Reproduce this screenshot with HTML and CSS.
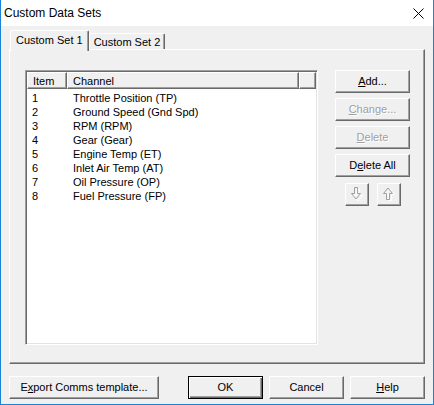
FILE: index.html
```html
<!DOCTYPE html>
<html>
<head>
<meta charset="utf-8">
<link rel="stylesheet" href="styles.css">
</head>
<body>
<div class="window">
  <div class="titlebar">
    <span class="title">Custom Data Sets</span>
    <svg class="close" width="11" height="11" viewBox="0 0 11 11"><path d="M0.5 0.5 L10.5 10.5 M10.5 0.5 L0.5 10.5" stroke="#000" stroke-width="1" fill="none"/></svg>
  </div>
  <div class="content">
    <div class="tabs">
      <div class="tab active">Custom Set 1</div>
      <div class="tab">Custom Set 2</div>
    </div>
    <div class="panel">
      <div class="list">
        <div class="header">
          <div class="hcell c-item">Item</div>
          <div class="hcell c-chan">Channel</div>
          <div class="hcell c-rest"></div>
        </div>
        <div class="rows">
          <div class="row"><span class="c-item">1</span><span class="c-chan">Throttle Position (TP)</span></div>
          <div class="row"><span class="c-item">2</span><span class="c-chan">Ground Speed (Gnd Spd)</span></div>
          <div class="row"><span class="c-item">3</span><span class="c-chan">RPM (RPM)</span></div>
          <div class="row"><span class="c-item">4</span><span class="c-chan">Gear (Gear)</span></div>
          <div class="row"><span class="c-item">5</span><span class="c-chan">Engine Temp (ET)</span></div>
          <div class="row"><span class="c-item">6</span><span class="c-chan">Inlet Air Temp (AT)</span></div>
          <div class="row"><span class="c-item">7</span><span class="c-chan">Oil Pressure (OP)</span></div>
          <div class="row"><span class="c-item">8</span><span class="c-chan">Fuel Pressure (FP)</span></div>
        </div>
      </div>
      <div class="side">
        <div class="btn"><u>A</u>dd...</div>
        <div class="btn disabled"><u>C</u>hange...</div>
        <div class="btn disabled"><u>D</u>elete</div>
        <div class="btn">D<u>e</u>lete All</div>
        <div class="arrows">
          <div class="btn arrow">
            <svg width="13" height="15" viewBox="0 0 13 15">
              <path d="M5.5 1.5 H8.5 V7.5 H11.5 L7 13 L2.5 7.5 H5.5 Z" transform="translate(1,1)" fill="none" stroke="#fff" stroke-width="1"/>
              <path d="M4.5 0.5 H7.5 V6.5 H10.5 L6 12 L1.5 6.5 H4.5 Z" fill="none" stroke="#a0a0a0" stroke-width="1"/>
            </svg>
          </div>
          <div class="btn arrow">
            <svg width="13" height="15" viewBox="0 0 13 15">
              <path d="M5.5 13.5 H8.5 V7.5 H11.5 L7 2 L2.5 7.5 H5.5 Z" transform="translate(1,0)" fill="none" stroke="#fff" stroke-width="1"/>
              <path d="M4.5 12.5 H7.5 V6.5 H10.5 L6 1 L1.5 6.5 H4.5 Z" fill="none" stroke="#a0a0a0" stroke-width="1"/>
            </svg>
          </div>
        </div>
      </div>
    </div>
    <div class="footer">
      <div class="btn export">E<u>x</u>port Comms template...</div>
      <div class="spacer"></div>
      <div class="btn default">OK</div>
      <div class="btn">Cancel</div>
      <div class="btn"><u>H</u>elp</div>
    </div>
  </div>
</div>
</body>
</html>
```
FILE: styles.css
```css
* { box-sizing: border-box; }
html, body { margin: 0; padding: 0; background: #f0f0f0; }
body { font-family: "Liberation Sans", Arial, sans-serif; font-size: 11px; color: #000; }

.window {
  width: 434px;
  height: 405px;
  border: 1px solid #1883d7;
  border-top: none;
  background: #f0f0f0;
  display: flex;
  flex-direction: column;
}

.titlebar {
  height: 26px;
  flex: none;
  background: #fff;
  display: flex;
  align-items: center;
  justify-content: space-between;
  padding: 0 9px 1px 3px;
}
.title { font-size: 12px; }
.close { display: block; margin-top: 1px; }

.content {
  flex: 1;
  display: flex;
  flex-direction: column;
  padding: 4px 8px 0 8px;
}

.tabs {
  display: flex;
  align-items: flex-end;
  height: 19px;
  padding-left: 1px;
}
.tab {
  height: 16px;
  padding: 1px 4px 0 4px;
  display: flex;
  align-items: center;
  border-top: 1px solid #fff;
  border-left: 1px solid #fff;
  border-right: 1px solid #696969;
  box-shadow: inset -1px 0 #a0a0a0;
  border-top-left-radius: 2px;
  border-top-right-radius: 2px;
  font-size: 11px;
}
.tab.active {
  height: 21px;
  padding: 0 5px 3px 5px;
  margin-bottom: -2px;
  position: relative;
  z-index: 1;
  background: #f0f0f0;
}

.panel {
  height: 315px;
  border-top: 1px solid #fff;
  border-left: 1px solid #fff;
  border-right: 1px solid #696969;
  border-bottom: 1px solid #696969;
  box-shadow: inset -1px -1px #a0a0a0;
  display: flex;
  padding: 20px 0 0 15px;
  gap: 17px;
}

.list {
  width: 293px;
  height: 275px;
  background: #fff;
  border-top: 1px solid #a0a0a0;
  border-left: 1px solid #a0a0a0;
  border-right: 1px solid #fff;
  border-bottom: 1px solid #fff;
  box-shadow: inset 1px 1px #696969, inset -1px -1px #e3e3e3;
  padding: 1px;
  display: flex;
  flex-direction: column;
}
.header {
  display: flex;
  height: 17px;
  flex: none;
}
.hcell {
  height: 17px;
  background: #f0f0f0;
  border-top: 1px solid #fff;
  border-left: 1px solid #fff;
  border-right: 1px solid #696969;
  border-bottom: 1px solid #696969;
  box-shadow: inset -1px -1px #a0a0a0;
  display: flex;
  align-items: center;
  padding-left: 5px;
}
.hcell.c-item { width: 40px; }
.hcell.c-chan { width: 232px; }
.hcell.c-rest { flex: 1; padding: 0; }

.rows { padding-top: 2px; }
.row {
  height: 14px;
  display: flex;
  align-items: center;
}
.row .c-item { width: 46px; padding-left: 5px; }
.row .c-chan { padding-left: 0; }

.side {
  width: 75px;
  display: flex;
  flex-direction: column;
  gap: 5px;
}

.btn {
  height: 23px;
  width: 75px;
  display: flex;
  align-items: center;
  justify-content: center;
  background: #f0f0f0;
  border-top: 1px solid #fff;
  border-left: 1px solid #fff;
  border-right: 1px solid #696969;
  border-bottom: 1px solid #696969;
  box-shadow: inset -1px -1px #a0a0a0;
  padding-bottom: 1px;
}
.btn.disabled {
  color: #a0a0a0;
  text-shadow: 1px 1px #fff;
}
.btn.default {
  border: 1px solid #000;
  box-shadow: inset 1px 1px #fff, inset -1px -1px #696969, inset -2px -2px #a0a0a0;
}

.arrows {
  display: flex;
  justify-content: center;
  gap: 8px;
  margin-top: 1px;
}
.btn.arrow { width: 24px; height: 23px; padding: 0; }
.btn.arrow svg { display: block; }

.footer {
  display: flex;
  gap: 6px;
  margin-top: 12px;
}
.btn.export { width: 150px; }
.spacer { flex: 1; }
```
